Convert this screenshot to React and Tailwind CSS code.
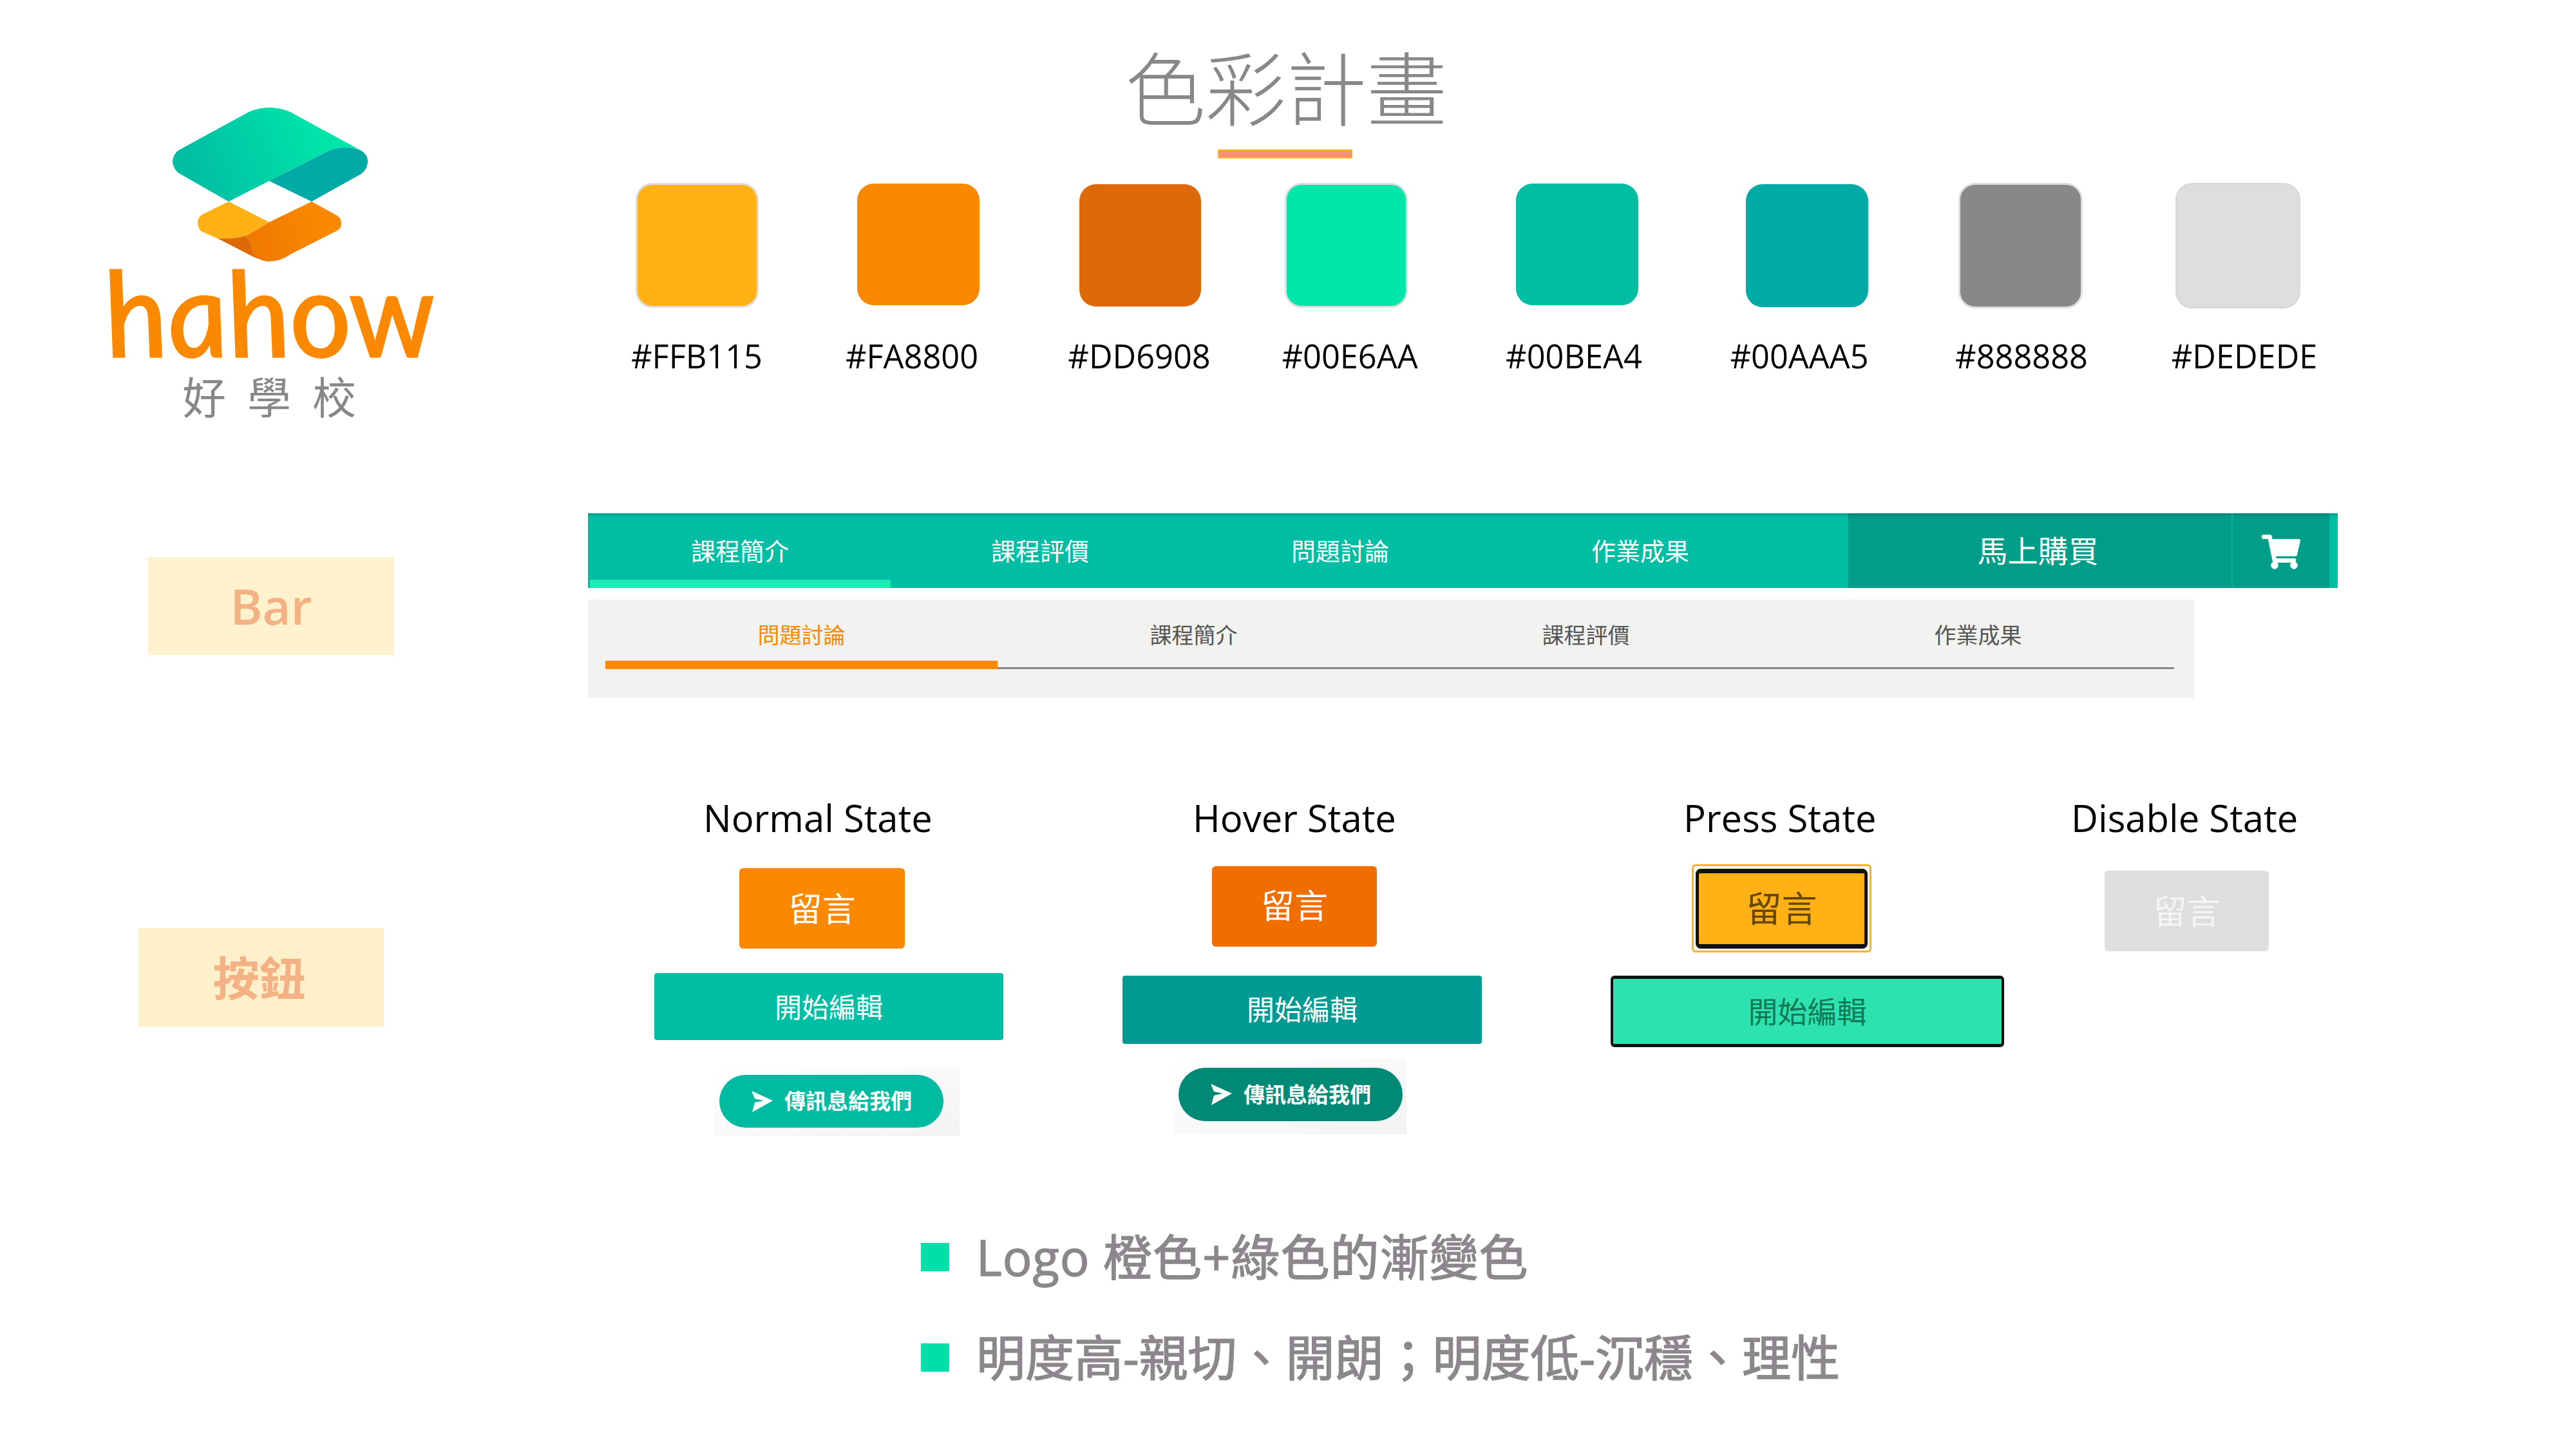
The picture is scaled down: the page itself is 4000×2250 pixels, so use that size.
import { FaShoppingCart } from "react-icons/fa";

const swatches = [
  { c: "ml-[74px] mt-0 w-[191px] h-[194px] rounded-[26px] bg-[#FFB115] border-[3px] border-[#DEDEDE]" },
  { c: "ml-[153px] mt-px w-[190px] h-[189px] rounded-[26px] bg-[#FA8800]" },
  { c: "ml-[155px] mt-[2px] w-[189px] h-[190px] rounded-[26px] bg-[#DD6908]" },
  { c: "ml-[130px] mt-0 w-[191px] h-[194px] rounded-[26px] bg-[#00E6AA] border-[3px] border-[#DEDEDE]" },
  { c: "ml-[168px] mt-px w-[190px] h-[189px] rounded-[26px] bg-[#00BEA4]" },
  { c: "ml-[167px] mt-[2px] w-[190px] h-[191px] rounded-[26px] bg-[#00AAA5]" },
  { c: "ml-[140px] mt-0 w-[193px] h-[195px] rounded-[26px] bg-[#888888] border-[3px] border-[#DEDEDE]" },
  { c: "ml-[144px] mt-0 w-[194px] h-[195px] rounded-[26px] bg-[#DEDEDE] border-[3px] border-[#D9D9D9]" },
];

const labels = [
  { t: "#FFB115", c: "ml-[39px]" },
  { t: "#FA8800", c: "ml-[74px]" },
  { t: "#DD6908", c: "ml-[93px]" },
  { t: "#00E6AA", c: "ml-[67px]" },
  { t: "#00BEA4", c: "ml-[88px]" },
  { t: "#00AAA5", c: "ml-[90px]" },
  { t: "#888888", c: "ml-[85px]" },
  { t: "#DEDEDE", c: "ml-[86px]" },
];

function Logo() {
  return (
    <svg width="306" height="242" viewBox="0 0 306 242" className="ml-[265px] mt-[166px] block">
      <defs>
        <linearGradient id="lg" x1="40" y1="120" x2="240" y2="40" gradientUnits="userSpaceOnUse">
          <stop offset="0" stopColor="#00BEA4" />
          <stop offset="1" stopColor="#00E6AA" />
        </linearGradient>
        <linearGradient id="lo" x1="120" y1="210" x2="230" y2="180" gradientUnits="userSpaceOnUse">
          <stop offset="0" stopColor="#F07800" />
          <stop offset="1" stopColor="#FA8800" />
        </linearGradient>
      </defs>
      <path d="M121 8Q153 -6 186 8L296 68Q275 59 250 66L153 115L90 147L11 102Q-5 84 11 68Z" fill="url(#lg)" />
      <path d="M153 115L250 66Q275 59 296 68Q306 74 306 84Q306 96 296 104L219 147Z" fill="#00AAA5" />
      <path d="M63 199L121 229Q135 237 153 240Q130 225 117 200Z" fill="#DD6908" />
      <path d="M153 179L219 147L259 169Q265 173 265 181Q265 189 257 193L186 229Q170 240 153 240Q135 240 125 222Q124 210 117 200Z" fill="url(#lo)" />
      <path d="M90 147L153 179L117 200Q100 206 72 204L47 193Q42 187 42 179Q42 172 49 167Z" fill="#FFB115" />
    </svg>
  );
}

function Tab({ children, active }) {
  return (
    <div className="relative flex h-full w-[466px] items-center justify-center text-[38px] text-white">
      {children}
      {active && <div className="absolute bottom-0 left-0 h-[13px] w-[467px] bg-[#1EEAB6]" />}
    </div>
  );
}

function SubTab({ children, active }) {
  return (
    <div
      className={
        "relative flex h-[108px] w-[609px] items-center justify-center border-b-[3px] border-[#888888] pt-[6px] text-[34px] " +
        (active ? "text-[#FA8800]" : "text-[#555555]")
      }
    >
      {children}
      {active && <div className="absolute -bottom-[3px] left-0 h-[13px] w-[609px] bg-[#FA8800]" />}
    </div>
  );
}

function Heading({ children, className }) {
  return <div className={"h-[70px] whitespace-nowrap text-[58px] leading-[66px] text-black " + className}>{children}</div>;
}

function SendPlane() {
  return (
    <svg width="33" height="33" viewBox="0 0 33 33" className="shrink-0">
      <path d="M0 0L33 15L1 33L5 18L19 15L5 12Z" fill="#ffffff" />
    </svg>
  );
}

function Bullet({ children, className, textClass }) {
  return (
    <div className={"ml-[517px] flex h-[90px] items-center gap-[42px] " + className}>
      <div className="h-[44px] w-[44px] shrink-0 bg-[#00DEAA]" />
      <div className={"whitespace-nowrap text-[76px] leading-[90px] text-[#8C878C] [-webkit-text-stroke:1.5px_#8C878C] " + textClass}>{children}</div>
    </div>
  );
}

export default function App() {
  return (
    <div className="flex h-[2250px] w-[4000px] overflow-hidden bg-white font-['Open_Sans','Noto_Sans_CJK_TC',sans-serif]">
      {/* left column */}
      <div className="flex w-[913px] shrink-0 flex-col">
        <Logo />
        <div className="ml-[160px] mt-[-10px] h-[170px] w-[520px] whitespace-nowrap font-['Lato',sans-serif] text-[183px] font-normal italic leading-[170px] text-[#FA8800] [-webkit-text-stroke:3px_#FA8800]">
          <span className="inline-block skew-x-[9deg]">hahow</span>
        </div>
        <div className="ml-[283px] mt-[10px] h-[72px] whitespace-nowrap font-['Noto_Sans_CJK_TC',sans-serif] text-[68px] leading-[72px] tracking-[33px] text-[#888888]">
          好學校
        </div>
        <div className="ml-[230px] mt-[215px] flex h-[152px] w-[382px] items-center justify-center bg-[#FFF2CC] text-[76px] font-semibold text-[#F4B183]">
          Bar
        </div>
        <div className="ml-[215px] mt-[424px] flex h-[153px] w-[381px] items-center justify-center bg-[#FFF0CC] pr-[6px] text-[72px] font-bold text-[#F4B183]">
          按鈕
        </div>
      </div>

      {/* right column */}
      <div className="flex min-w-0 flex-1 flex-col">
        <div className="ml-[834px] mt-[59px] h-[146px] whitespace-nowrap font-['Noto_Sans_CJK_TC',sans-serif] text-[125px] font-light leading-[146px] text-[#888888]">
          色彩計畫
        </div>
        <div className="ml-[978px] mt-[27px] h-[14px] w-[209px] border-[2px] border-[#FFB115] bg-[#F4917A]" />

        <div className="mt-[38px] flex h-[195px] items-start">
          {swatches.map((s, i) => (
            <div key={i} className={"shrink-0 " + s.c} />
          ))}
        </div>

        <div className="mt-[44px] flex h-[60px]">
          {labels.map((l) => (
            <div key={l.t} className={"w-[260px] shrink-0 text-center text-[50.5px] leading-[60px] text-black " + l.c}>
              {l.t}
            </div>
          ))}
        </div>

        {/* primary bar */}
        <div className="mt-[214px] flex h-[116px] w-[2717px] bg-[#00BEA4] pl-[3px] shadow-[inset_0_6px_5px_-3px_rgba(0,0,0,0.18)]">
          <Tab active>課程簡介</Tab>
          <Tab>課程評價</Tab>
          <Tab>問題討論</Tab>
          <Tab>作業成果</Tab>
          <div className="flex-1" />
          <div className="flex h-full w-[595px] items-center justify-center bg-[#009E88] pr-[6px] text-[47px] text-white shadow-[inset_0_6px_5px_-3px_rgba(0,0,0,0.18)]">
            馬上購買
          </div>
          <div className="flex h-full w-[152px] items-center justify-center border-l-[2px] border-[#00B59C] bg-[#009E88] pt-[4px] shadow-[inset_0_6px_5px_-3px_rgba(0,0,0,0.18)]">
            <FaShoppingCart className="h-[54px] w-[60px] text-white" />
          </div>
          <div className="w-[13px]" />
        </div>

        {/* secondary bar */}
        <div className="mt-[18px] flex h-[153px] w-[2494px] items-start bg-[#F2F2F0] pl-[27px]">
          <SubTab active>問題討論</SubTab>
          <SubTab>課程簡介</SubTab>
          <SubTab>課程評價</SubTab>
          <SubTab>作業成果</SubTab>
        </div>

        {/* button states */}
        <div className="mt-[153px] flex items-start">
          <div className="ml-[103px] flex w-[542px] shrink-0 flex-col">
            <Heading className="ml-[76px]">Normal State</Heading>
            <div className="ml-[132px] mt-[41px] flex h-[125px] w-[257px] items-center justify-center rounded-[6px] bg-[#FA8800] text-[52px] text-white">留言</div>
            <div className="mt-[38px] flex h-[104px] w-[542px] items-center justify-center rounded-[4px] bg-[#00BEA4] text-[42px] text-white">開始編輯</div>
            <div className="ml-[94px] mt-[43px] h-[106px] w-[380px] bg-linear-to-br from-white to-[#F3F3F3] pl-[7px] pt-[11px]">
              <div className="flex h-[82px] w-[348px] items-center gap-[18px] rounded-full bg-[#00BBA2] pl-[50px] text-[33px] font-bold text-white">
                <SendPlane />
                <span className="whitespace-nowrap">傳訊息給我們</span>
              </div>
            </div>
          </div>

          <div className="ml-[185px] flex w-[558px] shrink-0 flex-col">
            <Heading className="ml-[109px]">Hover State</Heading>
            <div className="ml-[139px] mt-[38px] flex h-[125px] w-[256px] items-center justify-center rounded-[6px] bg-[#F06D00] pb-[3px] text-[52px] text-white">留言</div>
            <div className="mt-[45px] flex h-[106px] w-[558px] items-center justify-center rounded-[4px] bg-[#009A92] text-[43px] text-white">開始編輯</div>
            <div className="ml-[79px] mt-[23px] h-[117px] w-[362px] bg-linear-to-br from-white to-[#F3F3F3] pl-[8px] pt-[14px]">
              <div className="flex h-[83px] w-[348px] items-center gap-[18px] rounded-full bg-[#008A76] pl-[50px] text-[33px] font-bold text-white">
                <SendPlane />
                <span className="whitespace-nowrap">傳訊息給我們</span>
              </div>
            </div>
          </div>

          <div className="ml-[200px] flex w-[607px] shrink-0 flex-col">
            <Heading className="ml-[113px]">Press State</Heading>
            <div className="ml-[126px] mt-[35px] flex h-[137px] w-[279px] items-center justify-center rounded-[6px] border-[3px] border-[#FFB115]">
              <div className="flex h-[124px] w-[267px] items-center justify-center rounded-[8px] border-x-[5px] border-y-[7px] border-[#111111] bg-[#FFB115] text-[55px] text-[#664700]">留言</div>
            </div>
            <div className="mt-[36px] flex h-[111px] w-[611px] items-center justify-center rounded-[6px] border-x-[4px] border-y-[5px] border-[#111111] bg-[#2EE2B0] text-[46px] text-[#0F7A55]">開始編輯</div>
          </div>

          <div className="ml-[110px] flex w-[344px] shrink-0 flex-col">
            <Heading className="ml-[-2px]">Disable State</Heading>
            <div className="ml-[50px] mt-[45px] flex h-[125px] w-[255px] items-center justify-center rounded-[6px] bg-[#DEDEDE] text-[52px] text-[#F5F5F5]">留言</div>
          </div>
        </div>

        {/* bullets */}
        <Bullet className="mt-[143px]" textClass="tracking-[1px]">Logo 橙色+綠色的漸變色</Bullet>
        <Bullet className="mt-[66px]" textClass="">明度高-親切、開朗；明度低-沉穩、理性</Bullet>
      </div>
    </div>
  );
}
